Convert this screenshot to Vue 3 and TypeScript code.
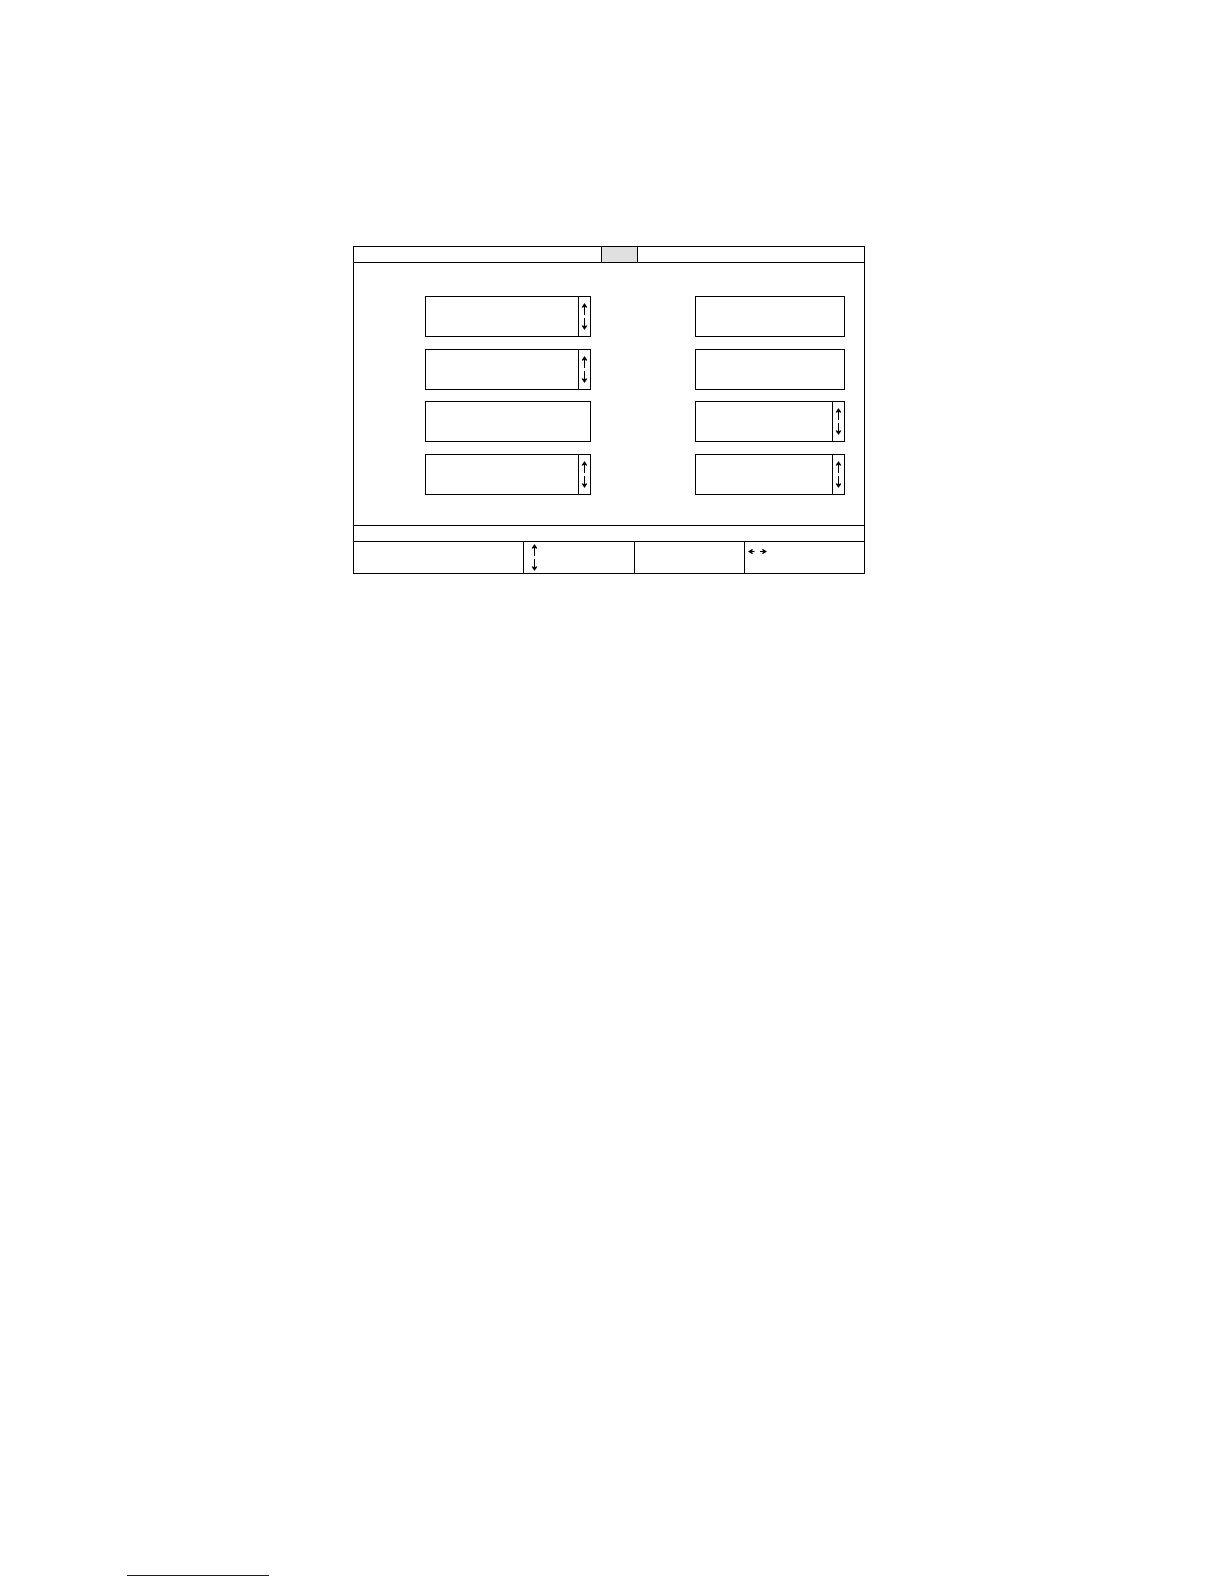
<script setup lang="ts">
interface Field {
  id: string
  label: string
  scroll: boolean
}

const fields: Field[] = [
  { id: 'l1', label: 'Left field 1', scroll: true },
  { id: 'r1', label: 'Right field 1', scroll: false },
  { id: 'l2', label: 'Left field 2', scroll: true },
  { id: 'r2', label: 'Right field 2', scroll: false },
  { id: 'l3', label: 'Left field 3', scroll: false },
  { id: 'r3', label: 'Right field 3', scroll: true },
  { id: 'l4', label: 'Left field 4', scroll: true },
  { id: 'r4', label: 'Right field 4', scroll: true },
]
</script>

<template>
  <div class="page">
    <main class="panel">
      <header class="bar">
        <span></span>
        <span class="active"></span>
        <span></span>
      </header>

      <section class="fields">
        <div v-for="field in fields" :key="field.id" class="field">
          <input :id="field.id" type="text" :aria-label="field.label" />
          <span v-if="field.scroll" class="scroll">
            <svg width="7" height="27" viewBox="0 0 7 27" aria-hidden="true">
              <path d="M3.5 0L5.2 2.6L6.3 4.2L5.6 4.8L4 4V12H3V4L1.4 4.8L0.7 4.2L1.8 2.6Z" />
              <path d="M3.5 27L5.2 24.4L6.3 22.8L5.6 22.2L4 23V15H3V23L1.4 22.2L0.7 22.8L1.8 24.4Z" />
            </svg>
          </span>
        </div>
      </section>

      <div class="message"></div>

      <footer class="keys">
        <div></div>
        <div class="vertical">
          <svg width="7" height="27" viewBox="0 0 7 27" aria-hidden="true">
            <path d="M3.5 0L5.2 2.6L6.3 4.2L5.6 4.8L4 4V12H3V4L1.4 4.8L0.7 4.2L1.8 2.6Z" />
            <path d="M3.5 27L5.2 24.4L6.3 22.8L5.6 22.2L4 23V15H3V23L1.4 22.2L0.7 22.8L1.8 24.4Z" />
          </svg>
        </div>
        <div></div>
        <div class="horizontal">
          <svg width="19" height="5" viewBox="0 0 19 5" aria-hidden="true">
            <path d="M0 2.5L4 0L5 0.6L4 2H6.5V3H4L5 4.4L4 5Z" />
            <path d="M19 2.5L15 0L14 0.6L15 2H12V3H15L14 4.4L15 5Z" />
          </svg>
        </div>
      </footer>
    </main>

    <a class="rule" href="#" aria-label="Contents"></a>
  </div>
</template>

<style>
body {
  margin: 0;
  background: #fff;
}
</style>

<style scoped>
.page {
  box-sizing: border-box;
  min-height: 100vh;
  padding: 246px 0 8px;
  display: grid;
  grid-template-columns: 353fr 512fr 359fr;
  grid-template-rows: auto 1fr;
  font-family: "Liberation Sans", sans-serif;
}

.panel {
  grid-column: 2;
  border: 1px solid #000;
}

.bar {
  display: grid;
  grid-template-columns: 247fr 37fr 226fr;
  height: 15px;
  border-bottom: 1px solid #000;
}

.active {
  background: #e0e0e0;
  border: solid #000;
  border-width: 0 1px;
}

.fields {
  box-sizing: border-box;
  min-height: 262px;
  padding: 33px 0 30px;
  display: grid;
  grid-template-columns:
    minmax(0, 71fr) minmax(0, 166fr) minmax(0, 104fr)
    minmax(0, 150fr) minmax(0, 19fr);
  align-content: space-between;
}

.field {
  display: flex;
  height: 39px;
  border: 1px solid #000;
}

.field:nth-child(odd) {
  grid-column: 2;
}

.field:nth-child(even) {
  grid-column: 4;
}

.field input {
  flex: 1;
  width: 0;
  min-width: 0;
  padding: 0 4px;
  border: 0;
  outline: 0;
  background: transparent;
  font: inherit;
}

.scroll {
  display: flex;
  align-items: center;
  justify-content: center;
  width: 11px;
  border-left: 1px solid #000;
}

.message {
  height: 15px;
  border: solid #000;
  border-width: 1px 0;
}

.keys {
  display: grid;
  grid-template-columns: 169fr 111fr 110fr 120fr;
  height: 31px;
}

.keys > div + div {
  border-left: 1px solid #000;
}

.keys > div {
  display: flex;
  align-items: flex-start;
}

.keys .vertical {
  padding: 2px 7px;
}

.keys .horizontal {
  padding: 7px 3px;
}

.rule {
  grid-column: 1;
  align-self: end;
  justify-self: end;
  width: 142px;
  margin-right: 84px;
  border-bottom: 1px solid #10108c;
}
</style>
